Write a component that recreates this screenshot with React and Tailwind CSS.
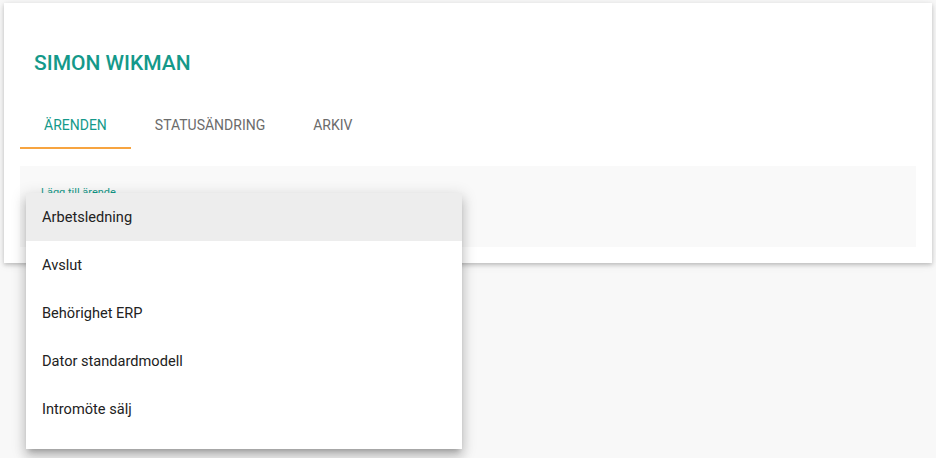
import { useState } from 'react'

const tabs = ['Ärenden', 'Statusändring', 'Arkiv']

const options = [
  'Arbetsledning',
  'Avslut',
  'Behörighet ERP',
  'Dator standardmodell',
  'Intromöte sälj',
]

export default function App() {
  const [active, setActive] = useState(0)
  const [hovered, setHovered] = useState(0)

  return (
    <div className="min-h-[458px] bg-[#f8f8f8] pt-[3px] px-[4px] font-['Roboto',sans-serif]">
      {/* Card */}
      <div className="relative bg-white shadow-[0_2px_4px_rgba(0,0,0,0.2),0_1px_10px_rgba(0,0,0,0.08)] px-4 pb-4">
        <h1 className="pl-[14px] pt-[43px] h-[98px] text-[21px] leading-[34px] font-medium text-[#14998a]">
          SIMON WIKMAN
        </h1>

        {/* Tabs */}
        <div className="flex h-12">
          {tabs.map((tab, idx) => (
            <button
              key={tab}
              onClick={() => setActive(idx)}
              className={`relative px-6 h-12 text-sm uppercase ${
                active === idx ? 'text-[#14998a]' : 'text-[#6b6b6b]'
              }`}
            >
              {tab}
              {active === idx && (
                <span className="absolute left-0 right-0 bottom-0 h-[2px] bg-[#f7a440]" />
              )}
            </button>
          ))}
        </div>

        {/* Add case section */}
        <div className="mt-[17px] h-[81px] bg-[#f9f9f9] pl-[21px] pt-[20px]">
          <div className="text-[11px] leading-[14px] text-[#14998a]">Lägg till ärende</div>
        </div>

        {/* Dropdown menu */}
        <div className="absolute left-[22px] top-[190px] w-[436px] bg-white pb-4 shadow-[0_5px_5px_-3px_rgba(0,0,0,0.2),0_8px_10px_1px_rgba(0,0,0,0.14),0_3px_14px_2px_rgba(0,0,0,0.12)] z-10">
          {options.map((opt, idx) => (
            <div
              key={opt}
              onMouseEnter={() => setHovered(idx)}
              className={`h-12 flex items-center pl-4 pr-4 pt-[2px] text-[14.6px] text-[#222] ${
                hovered === idx ? 'bg-[#ededed]' : ''
              }`}
            >
              {opt}
            </div>
          ))}
        </div>
      </div>
    </div>
  )
}
